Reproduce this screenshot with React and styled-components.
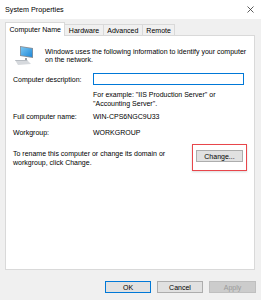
import React from 'react';
import styled, { createGlobalStyle } from 'styled-components';

const Global = createGlobalStyle`
  html, body { margin: 0; padding: 0; background: #f0f0f0; }
  body { font-family: "Liberation Sans", Arial, sans-serif; font-size: 7px; color: #000; }
`;

const Window = styled.div`
  width: 261px;
  height: 300px;
  background: #f0f0f0;
  overflow: hidden;
`;

const TitleBar = styled.div`
  height: 19px;
  background: #fff;
  display: flex;
  align-items: center;
  justify-content: space-between;
  padding: 0 7px 0 5px;
  font-size: 7.2px;
`;

const Body = styled.div`
  padding: 3px 6px 0 5px;
`;

const TabStrip = styled.div`
  display: flex;
  align-items: flex-end;
  height: 13px;
`;

const Tab = styled.div`
  height: ${p => (p.$active ? '13px' : '10px')};
  padding: 0 3.5px;
  display: flex;
  align-items: center;
  background: ${p => (p.$active ? '#fff' : '#f0f0f0')};
  border: 1px solid #d9d9d9;
  border-bottom: none;
  margin-left: ${p => (p.$active ? '0' : '-1px')};
  margin-bottom: ${p => (p.$active ? '-1px' : '0')};
  position: relative;
  z-index: ${p => (p.$active ? 2 : 1)};
`;

const Panel = styled.div`
  box-sizing: border-box;
  height: 235px;
  width: 250px;
  background: #fff;
  border: 1px solid #d9d9d9;
  padding: 10px 0 0 7px;
`;

const Intro = styled.div`
  display: flex;
  gap: 11px;
  margin-left: 2px;
`;

const IntroText = styled.div`
  line-height: 8px;
  margin-top: 2px;
`;

const Row = styled.div`
  display: grid;
  grid-template-columns: 80px 151px;
  align-items: center;
  margin-top: ${p => p.$gap || 0}px;
  line-height: 9px;
`;

const Input = styled.div`
  height: 10px;
  border: 1px solid #0078d7;
  background: #fff;
`;

const Rename = styled.div`
  display: flex;
  justify-content: space-between;
  align-items: flex-start;
  margin-top: 12px;
  line-height: 9px;
  width: 230px;
`;

const Highlight = styled.div`
  position: relative;
  margin-top: 1px;
  &::after {
    content: '';
    position: absolute;
    left: -4px;
    right: -4px;
    top: -6px;
    bottom: -9px;
    border: 1.5px solid #e8464b;
    box-shadow: 0 1px 2px rgba(0, 0, 0, 0.15);
    pointer-events: none;
  }
`;

const Button = styled.div`
  box-sizing: border-box;
  width: ${p => p.$w}px;
  height: 12px;
  display: flex;
  align-items: center;
  justify-content: center;
  background: ${p => (p.$disabled ? '#cccccc' : '#e1e1e1')};
  border: 1px solid ${p => (p.$primary ? '#0078d7' : p.$disabled ? '#bfbfbf' : '#adadad')};
  color: ${p => (p.$disabled ? '#9a9a9a' : '#000')};
`;

const Footer = styled.div`
  display: flex;
  justify-content: flex-end;
  gap: 6px;
  padding-top: 11px;
  margin-right: -1px;
`;

function ComputerIcon() {
  return (
    <svg width="19" height="20" viewBox="0 0 19 20">
      <defs>
        <linearGradient id="scr" x1="0" y1="0" x2="1" y2="1">
          <stop offset="0" stopColor="#7cc7f2" />
          <stop offset="1" stopColor="#1e88d8" />
        </linearGradient>
      </defs>
      <polygon points="5,0 18,2 18,12 5,10" fill="#8a8f96" />
      <polygon points="5.8,1 17.2,2.8 17.2,11 5.8,9.3" fill="url(#scr)" />
      <polygon points="0,14 12,14 16,18 3,19" fill="#d6d9dd" />
      <polygon points="0,14 12,14 12.6,15 0.6,15" fill="#b6bbc1" />
      <rect x="10" y="12" width="2" height="2" fill="#9aa0a6" />
    </svg>
  );
}

export default function App() {
  return (
    <Window>
      <Global />
      <TitleBar>
        <span>System Properties</span>
        <svg width="7" height="7" viewBox="0 0 7 7">
          <path d="M0.5 0.5 L6.5 6.5 M6.5 0.5 L0.5 6.5" stroke="#333" strokeWidth="0.8" />
        </svg>
      </TitleBar>
      <Body>
        <TabStrip>
          <Tab $active>Computer Name</Tab>
          <Tab>Hardware</Tab>
          <Tab>Advanced</Tab>
          <Tab>Remote</Tab>
        </TabStrip>
        <Panel>
          <Intro>
            <ComputerIcon />
            <IntroText>
              Windows uses the following information to identify your computer
              <br />
              on the network.
            </IntroText>
          </Intro>
          <Row $gap={7}>
            <span>Computer description:</span>
            <Input />
          </Row>
          <Row $gap={5}>
            <span />
            <span>
              For example: "IIS Production Server" or
              <br />
              "Accounting Server".
            </span>
          </Row>
          <Row $gap={4}>
            <span>Full computer name:</span>
            <span>WIN-CPS6NGC9U33</span>
          </Row>
          <Row $gap={7}>
            <span>Workgroup:</span>
            <span>WORKGROUP</span>
          </Row>
          <Rename>
            <span>
              To rename this computer or change its domain or
              <br />
              workgroup, click Change.
            </span>
            <Highlight>
              <Button $w={47}>Change...</Button>
            </Highlight>
          </Rename>
        </Panel>
        <Footer>
          <Button $w={46} $primary>OK</Button>
          <Button $w={46}>Cancel</Button>
          <Button $w={47} $disabled>Apply</Button>
        </Footer>
      </Body>
    </Window>
  );
}
